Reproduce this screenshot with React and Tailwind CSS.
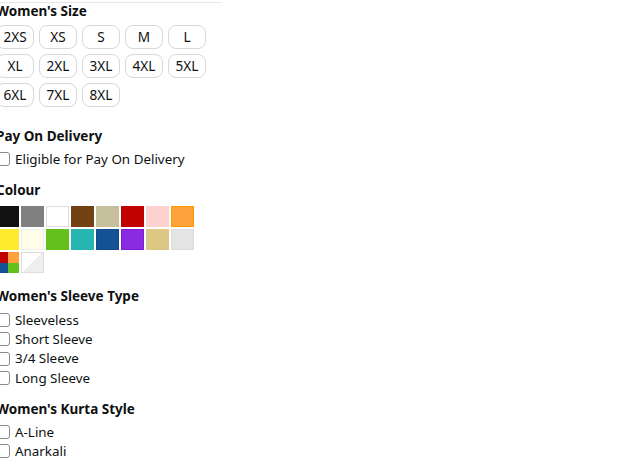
import React from 'react';

const sizes = ['2XS', 'XS', 'S', 'M', 'L', 'XL', '2XL', '3XL', '4XL', '5XL', '6XL', '7XL', '8XL'];

const colours = [
  { bg: 'bg-[#111111]', border: 'border-[#111111]' },
  { bg: 'bg-[#808080]', border: 'border-[#808080]' },
  { bg: 'bg-white', border: 'border-[#dddddd]' },
  { bg: 'bg-[#734214]', border: 'border-[#734214]' },
  { bg: 'bg-[#c5bf9b]', border: 'border-[#c5bf9b]' },
  { bg: 'bg-[#c10000]', border: 'border-[#c10000]' },
  { bg: 'bg-[#ffd2d2]', border: 'border-[#ffd2d2]' },
  { bg: 'bg-[#ffa23c]', border: 'border-[#ff9900]' },
  { bg: 'bg-[#ffeb2d]', border: 'border-[#ffeb2d]' },
  { bg: 'bg-[#fffde8]', border: 'border-[#eeeeee]' },
  { bg: 'bg-[#62c11b]', border: 'border-[#62c11b]' },
  { bg: 'bg-[#26b5b0]', border: 'border-[#26b5b0]' },
  { bg: 'bg-[#145294]', border: 'border-[#0f4a8a]' },
  { bg: 'bg-[#8a2be2]', border: 'border-[#7a1fd6]' },
  { bg: 'bg-[#dcc785]', border: 'border-[#dcc785]' },
  { bg: 'bg-[#e4e4e4]', border: 'border-[#dddddd]' },
];

const Checkbox = () => (
  <span className="inline-block w-[14px] h-[14px] border border-[#888c8c] rounded-[3px] bg-white shrink-0" />
);

const Heading = ({ children, className = '' }) => (
  <div className={`text-[13.5px] font-bold leading-[20px] ${className}`}>{children}</div>
);

const CheckItem = ({ label }) => (
  <div className="flex items-center gap-[5px] h-[19.3px] text-[13.4px]">
    <Checkbox />
    <span>{label}</span>
  </div>
);

export default function App() {
  return (
    <div className="w-[226px] -ml-[4px] font-['Noto_Sans',sans-serif] text-[#0f1111] bg-white">
      <div className="mt-[2px] border-t border-[#e7e7e7]" />

      <Heading className="-mt-[2px]">Women's Size</Heading>
      <div className="flex flex-wrap gap-[5px] mt-[4px] w-[220px]">
        {sizes.map((s) => (
          <div
            key={s}
            className="w-[38px] h-[24px] border border-[#d5d9d9] rounded-[8px] flex items-center justify-center text-[13.6px]"
          >
            {s}
          </div>
        ))}
      </div>

      <Heading className="mt-[19px]">Pay On Delivery</Heading>
      <div className="mt-[3px]">
        <CheckItem label="Eligible for Pay On Delivery" />
      </div>

      <Heading className="mt-[12px]">Colour</Heading>
      <div className="flex flex-wrap gap-x-[2px] gap-y-[2px] mt-[6px] w-[202px]">
        {colours.map((c, i) => (
          <div key={i} className={`w-[23px] h-[21px] border ${c.bg} ${c.border}`} />
        ))}
        <div className="w-[23px] h-[21px] grid grid-cols-2 grid-rows-2">
          <div className="bg-[#c10000]" />
          <div className="bg-[#ffa23c]" />
          <div className="bg-[#145294]" />
          <div className="bg-[#62c11b]" />
        </div>
        <div className="w-[23px] h-[21px] border border-[#dddddd] bg-[linear-gradient(135deg,#ffffff_50%,#eeeeee_50%)]" />
      </div>

      <Heading className="mt-[13px]">Women's Sleeve Type</Heading>
      <div className="mt-[4px]">
        <CheckItem label="Sleeveless" />
        <CheckItem label="Short Sleeve" />
        <CheckItem label="3/4 Sleeve" />
        <CheckItem label="Long Sleeve" />
      </div>

      <Heading className="mt-[12px]">Women's Kurta Style</Heading>
      <div className="mt-[3px]">
        <CheckItem label="A-Line" />
        <CheckItem label="Anarkali" />
      </div>
    </div>
  );
}
